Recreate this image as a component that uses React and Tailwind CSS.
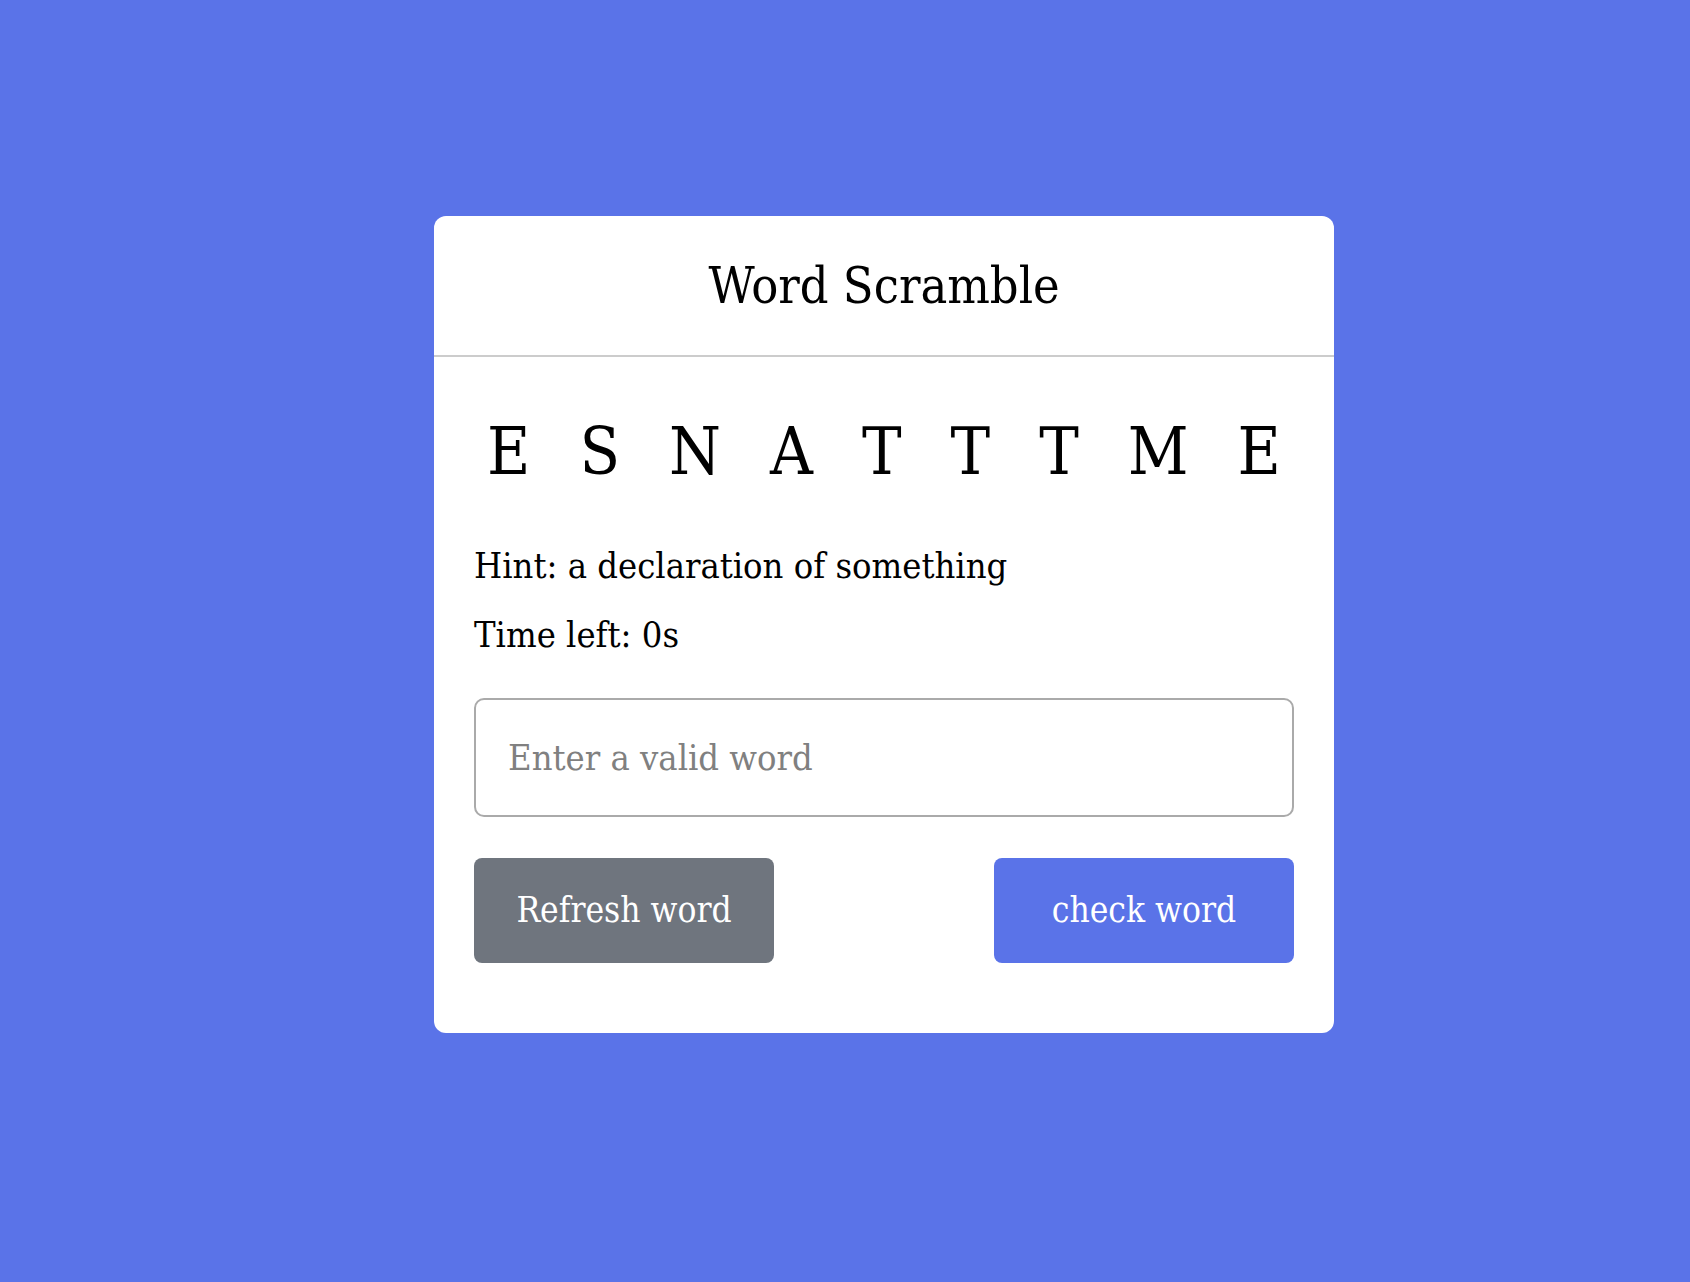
import React from "react";

const FONT = { fontFamily: "'DejaVu Serif Condensed', 'DejaVu Serif', serif" };

export default function App() {
  const letters = ["E", "S", "N", "A", "T", "T", "T", "M", "E"];
  return (
    <div
      className="min-h-screen w-full bg-[#5a73e8] pt-[216px] pl-[434px] font-stretch-condensed"
      style={FONT}
    >
      <div className="w-[900px] bg-white rounded-[12px] text-black">
        <div className="h-[141px] flex items-center justify-center border-b-2 border-[#cccccc]">
          <h2 className="text-[50px] leading-none font-normal">Word Scramble</h2>
        </div>
        <div className="px-[40px] pb-[70px]">
          <div className="mt-[62px] flex justify-center gap-[49px] text-[66px] leading-none">
            {letters.map((l, i) => (
              <span key={i}>{l}</span>
            ))}
          </div>
          <p className="mt-[63px] text-[36px] leading-none">Hint: a declaration of something</p>
          <p className="mt-[33px] text-[36px] leading-none">Time left: 0s</p>
          <input
            type="text"
            placeholder="Enter a valid word"
            className="mt-[45px] block w-full h-[119px] border-2 border-[#aaaaaa] rounded-[10px] px-[32px] text-[36px] placeholder:text-[#808080] outline-none"
            style={FONT}
          />
          <div className="mt-[41px] flex justify-between">
            <button className="w-[300px] h-[105px] rounded-[8px] bg-[#6f757e] text-white text-[35px]" style={FONT}>
              Refresh word
            </button>
            <button className="w-[300px] h-[105px] rounded-[8px] bg-[#5a73e8] text-white text-[35px]" style={FONT}>
              check word
            </button>
          </div>
        </div>
      </div>
    </div>
  );
}
